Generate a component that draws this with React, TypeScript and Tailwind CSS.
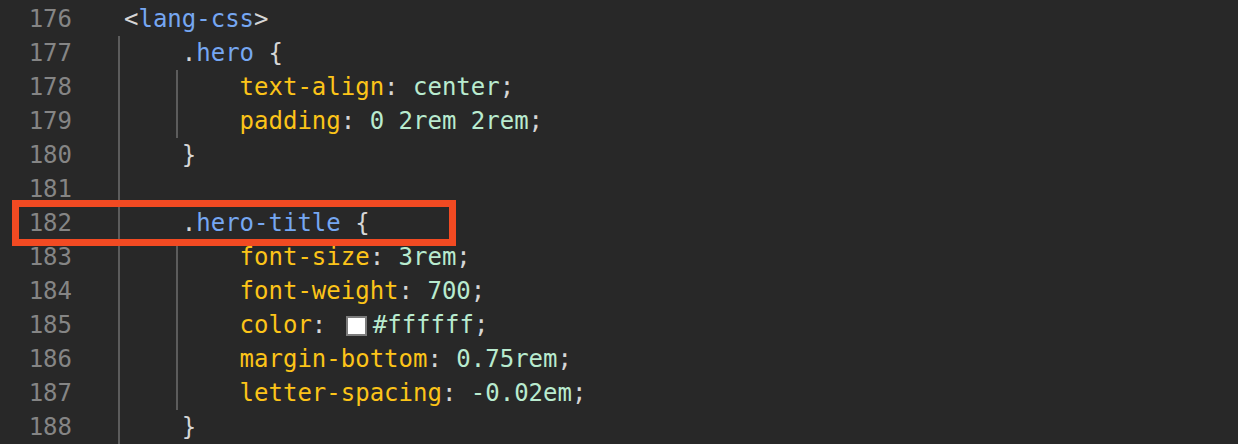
import React from 'react';

type Tok = { t: string; c?: 'p' | 'k' | 's' | 'v' | 'sw' };

// guides: how many indent guides are drawn on that line; indent: text depth
type Line = { n: number; indent: number; guides: number; toks: Tok[] };

const lines: Line[] = [
  { n: 176, indent: 0, guides: 0, toks: [{ t: '<', c: 'p' }, { t: 'lang-css', c: 's' }, { t: '>', c: 'p' }] },
  { n: 177, indent: 1, guides: 1, toks: [{ t: '.', c: 'p' }, { t: 'hero', c: 's' }, { t: ' {', c: 'p' }] },
  { n: 178, indent: 2, guides: 2, toks: [{ t: 'text-align', c: 'k' }, { t: ': ', c: 'p' }, { t: 'center', c: 'v' }, { t: ';', c: 'p' }] },
  { n: 179, indent: 2, guides: 2, toks: [{ t: 'padding', c: 'k' }, { t: ': ', c: 'p' }, { t: '0 2rem 2rem', c: 'v' }, { t: ';', c: 'p' }] },
  { n: 180, indent: 1, guides: 1, toks: [{ t: '}', c: 'p' }] },
  { n: 181, indent: 1, guides: 1, toks: [] },
  { n: 182, indent: 1, guides: 1, toks: [{ t: '.', c: 'p' }, { t: 'hero-title', c: 's' }, { t: ' {', c: 'p' }] },
  { n: 183, indent: 2, guides: 2, toks: [{ t: 'font-size', c: 'k' }, { t: ': ', c: 'p' }, { t: '3rem', c: 'v' }, { t: ';', c: 'p' }] },
  { n: 184, indent: 2, guides: 2, toks: [{ t: 'font-weight', c: 'k' }, { t: ': ', c: 'p' }, { t: '700', c: 'v' }, { t: ';', c: 'p' }] },
  { n: 185, indent: 2, guides: 2, toks: [{ t: 'color', c: 'k' }, { t: ': ', c: 'p' }, { t: '', c: 'sw' }, { t: '#ffffff', c: 'v' }, { t: ';', c: 'p' }] },
  { n: 186, indent: 2, guides: 2, toks: [{ t: 'margin-bottom', c: 'k' }, { t: ': ', c: 'p' }, { t: '0.75rem', c: 'v' }, { t: ';', c: 'p' }] },
  { n: 187, indent: 2, guides: 2, toks: [{ t: 'letter-spacing', c: 'k' }, { t: ': ', c: 'p' }, { t: '-0.02em', c: 'v' }, { t: ';', c: 'p' }] },
  { n: 188, indent: 1, guides: 1, toks: [{ t: '}', c: 'p' }] },
];

const Token: React.FC<{ tok: Tok }> = ({ tok }) => {
  if (tok.c === 'sw') {
    return (
      <span className="inline-block w-[21px] h-[20px] ml-[5px] mr-[6px] align-[-3px] border-2 border-[#7c7c7c] bg-white" />
    );
  }
  const color =
    tok.c === 'k'
      ? 'text-[#fcc419]'
      : tok.c === 's'
      ? 'text-[#76a7f2]'
      : tok.c === 'v'
      ? 'text-[#b9ebcf]'
      : 'text-[#d6d6d6]';
  return <span className={color}>{tok.t}</span>;
};

const CodeLine: React.FC<{ line: Line }> = ({ line }) => (
  <div className="flex h-[34px]">
    <div className="w-[72px] shrink-0 text-right text-[#858585]">{line.n}</div>
    <div className="flex pl-[46px] whitespace-pre">
      {Array.from({ length: line.indent }).map((_, i) => (
        <div
          key={i}
          className={i < line.guides ? 'w-[4ch] border-l-2 border-[#5c5c5c]' : 'w-[4ch]'}
        />
      ))}
      <div className="pl-[6px]">
        {line.toks.map((tok, i) => (
          <Token key={i} tok={tok} />
        ))}
      </div>
    </div>
  </div>
);

const App: React.FC = () => {
  return (
    <div
      className="relative w-[1238px] h-[444px] overflow-hidden bg-[#282828] pt-[2px] text-[24px] leading-[34px]"
      style={{ fontFamily: '"DejaVu Sans Mono", "Liberation Mono", monospace' }}
    >
      {lines.map((line) => (
        <CodeLine key={line.n} line={line} />
      ))}

      {/* highlight box around line 182 */}
      <div className="absolute left-[12px] top-[200px] w-[444px] h-[46px] border-[7px] border-[#f24a22]" />
    </div>
  );
};

export default App;
